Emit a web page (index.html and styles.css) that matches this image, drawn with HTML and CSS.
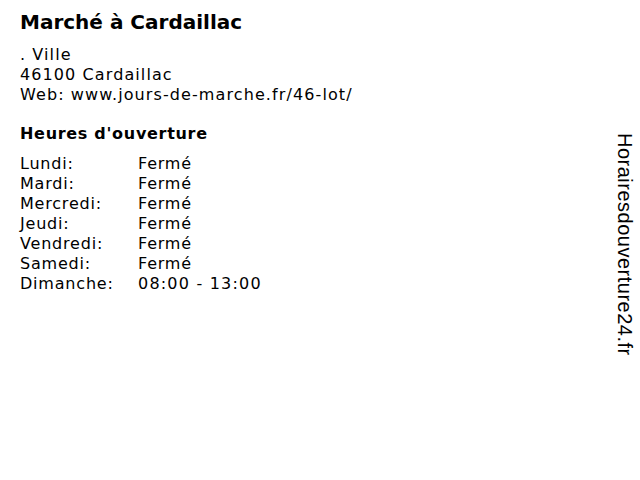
FILE: index.html
```html
<!DOCTYPE html>
<html lang="fr">
<head>
<meta charset="utf-8">
<link rel="stylesheet" href="styles.css">
</head>
<body>
<div class="page">
  <main class="content">
    <h1 class="title">Marché à Cardaillac</h1>
    <div class="address">
      <div>. Ville</div>
      <div>46100 Cardaillac</div>
      <div>Web: www.jours-de-marche.fr/46-lot/</div>
    </div>
    <h2 class="subtitle">Heures d'ouverture</h2>
    <div class="hours">
      <span class="day">Lundi:</span><span class="time">Fermé</span>
      <span class="day">Mardi:</span><span class="time">Fermé</span>
      <span class="day">Mercredi:</span><span class="time">Fermé</span>
      <span class="day">Jeudi:</span><span class="time">Fermé</span>
      <span class="day">Vendredi:</span><span class="time">Fermé</span>
      <span class="day">Samedi:</span><span class="time">Fermé</span>
      <span class="day">Dimanche:</span><span class="time time-wide">08:00 - 13:00</span>
    </div>
  </main>
  <aside class="side">Horairesdouverture24.fr</aside>
</div>
</body>
</html>
```

FILE: styles.css
```css
html, body {
  margin: 0;
  padding: 0;
  background: #fff;
}
.page {
  width: 640px;
  height: 480px;
  display: flex;
  justify-content: space-between;
  color: #000;
  font-family: "DejaVu Sans", sans-serif;
}
.content {
  padding: 9px 0 0 20px;
}
.title {
  margin: 0;
  font-size: 20px;
  line-height: 26px;
  font-weight: bold;
}
.address {
  margin-top: 10px;
  font-size: 16px;
  line-height: 20px;
  letter-spacing: 1.1px;
}
.subtitle {
  margin: 19px 0 0 0;
  font-size: 16px;
  line-height: 20px;
  font-weight: bold;
  letter-spacing: 0.7px;
}
.hours {
  margin-top: 10px;
  display: grid;
  grid-template-columns: 118px auto;
  font-size: 16px;
  line-height: 20px;
  letter-spacing: 0.8px;
}
.time-wide {
  letter-spacing: 1.2px;
}
.side {
  writing-mode: vertical-rl;
  font-family: "Liberation Sans", Arial, sans-serif;
  font-size: 20px;
  line-height: 20px;
  letter-spacing: 0.5px;
  padding-top: 133px;
  margin-right: 5px;
}
```
